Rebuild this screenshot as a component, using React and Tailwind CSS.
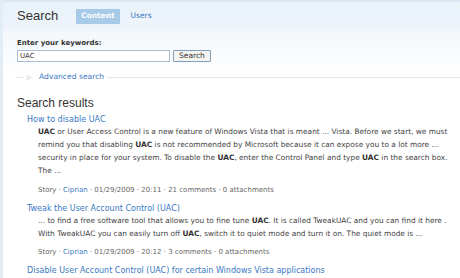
import React from 'react';

const body = { fontFamily: '"DejaVu Sans", Verdana, sans-serif' };
const head = { fontFamily: '"Liberation Sans", Arial, sans-serif' };

const Meta = ({ time, comments }) => (
  <div className="h-[13px] flex items-center text-[7px] text-[#666]" style={body}>
    Story · <span className="text-[#3a78c3] mx-[2px]">Ciprian</span> · 01/29/2009 · {time} · {comments} · 0 attachments
  </div>
);

const App = () => {
  return (
    <div className="w-[460px] h-[278px] overflow-hidden bg-white border-l-[3px] border-[#e3edf6]">
      <div className="h-[2px] bg-[#dbe8f3]" />
      <div className="h-[28px] bg-gradient-to-b from-[#e9f2fa] to-[#eef4fa] flex items-center pl-[14px]">
        <h1 className="text-[13px] text-[#333] w-[59px]" style={head}>Search</h1>
        <span className="h-[15px] px-[5px] bg-[#a6cae8] text-white text-[7.5px] font-bold flex items-center" style={body}>Content</span>
        <span className="ml-[11px] text-[7.5px] text-[#3a78c3]" style={body}>Users</span>
      </div>
      <div className="h-[44px] bg-gradient-to-b from-[#f2f7fb] to-white pl-[14px] pt-[8px]">
        <div className="text-[7px] font-bold text-[#333] leading-[11px]" style={body}>Enter your keywords:</div>
        <div className="flex items-center gap-[3px] mt-[1px]">
          <div className="w-[153px] h-[12px] border border-[#a9bdd4] bg-white flex items-center px-[2px] text-[7px] text-[#333]" style={body}>UAC</div>
          <button className="w-[38px] h-[12px] border border-[#7f9db9] bg-[#f4f4f0] rounded-[1px] text-[7.5px] text-[#333] flex items-center justify-center" style={body}>Search</button>
        </div>
      </div>
      <div className="h-[12px] flex items-center pl-[14px] -mt-[3px]">
        <div className="w-[7px] h-px bg-[#dde8f2]" />
        <span className="text-[6px] text-[#aaa] mx-[3px]">▷</span>
        <span className="text-[7.6px] text-[#3a78c3] ml-[4px] mr-[3px]" style={body}>Advanced search</span>
        <div className="flex-1 h-px bg-[#dde8f2]" />
      </div>
      <div className="pl-[14px] pt-[13px]">
        <h2 className="text-[12px] text-[#333] leading-[14px]" style={head}>Search results</h2>
        <div className="pl-[10px] mt-[4px]">
          <div className="h-[11px] flex items-center text-[8px] text-[#3a78c3] whitespace-nowrap" style={body}>How to disable UAC</div>
          <div className="pl-[11px] text-[7.4px] leading-[13px] text-[#444] whitespace-nowrap" style={body}>
            <b className="text-[#333]">UAC</b> or User Access Control is a new feature of Windows Vista that is meant ... Vista. Before we start, we must<br />
            remind you that disabling <b className="text-[#333]">UAC</b> is not recommended by Microsoft because it can expose you to a lot more ...<br />
            security in place for your system. To disable the <b className="text-[#333]">UAC</b>, enter the Control Panel and type <b className="text-[#333]">UAC</b> in the search box.<br />
            The ...
            <div className="h-[7px]" />
            <Meta time="20:11" comments="21 comments" />
          </div>
          <div className="h-[6px]" />
          <div className="h-[11px] flex items-center text-[8px] text-[#3a78c3] whitespace-nowrap" style={body}>Tweak the User Account Control (UAC)</div>
          <div className="pl-[11px] text-[7.4px] leading-[13px] text-[#444] whitespace-nowrap" style={body}>
            ... to find a free software tool that allows you to fine tune <b className="text-[#333]">UAC</b>. It is called TweakUAC and you can find it here .<br />
            With TweakUAC you can easily turn off <b className="text-[#333]">UAC</b>, switch it to quiet mode and turn it on. The quiet mode is ...
            <div className="h-[6px]" />
            <Meta time="20:12" comments="3 comments" />
          </div>
          <div className="h-[6px]" />
          <div className="h-[11px] flex items-center text-[8px] text-[#3a78c3] whitespace-nowrap" style={body}>Disable User Account Control (UAC) for certain Windows Vista applications</div>
        </div>
      </div>
    </div>
  );
};

export default App;
